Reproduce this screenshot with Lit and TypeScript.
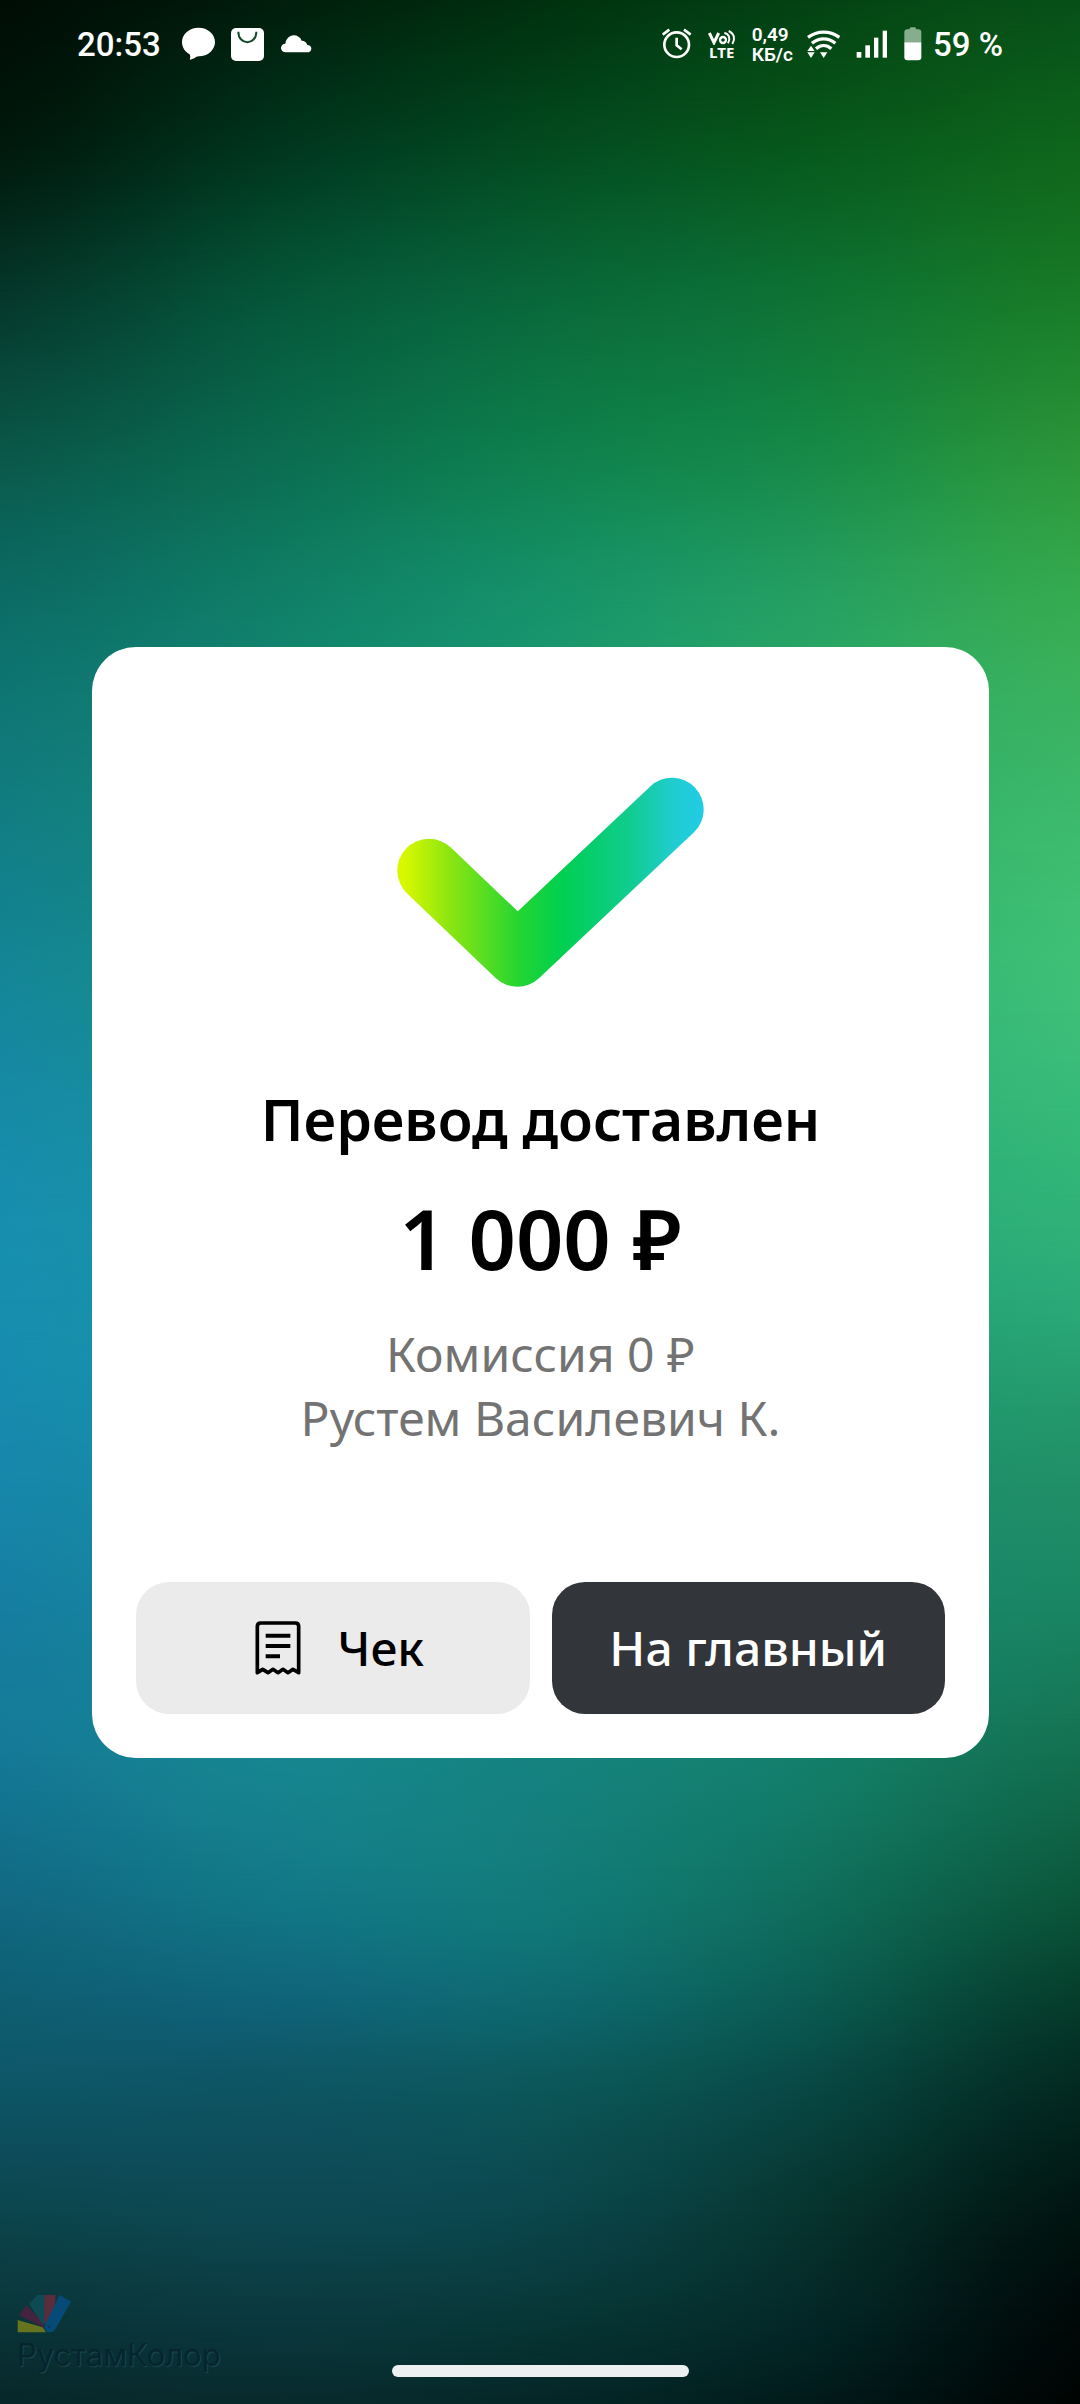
import { LitElement, html, css } from "lit";
import { customElement, property } from "lit/decorators.js";
import { styleMap } from "lit/directives/style-map.js";

type Rgb = number[];

interface ColourRow {
  y: number;
  colours: Rgb[];
}

/* Rows of the backdrop mesh: the offset from the top in percent, then colours
   spread evenly from left to right. */
const MESH: [number, string][] = [
  [0, "000d06 001d0b 00300f 044213 075019"],
  [6, "00190d 00351d 034a20 07581c 0f651c"],
  [12, "053629 055438 096639 0e7133 187a27"],
  [19, "0a584a 0b6c50 0f804e 178a48 2b963a"],
  [25, "0c6c66 107f68 17926a 26a062 36ab50"],
  [31, "107979 148874 1a9a6e 2baa66 3bb565"],
  [40, "148596 188e80 1b9c78 2aae70 3fc077"],
  [48, "178cab 1a9498 1c9c84 28a878 33b778"],
  [54, "178eae 1994a0 1a9888 22a078 2baa77"],
  [60, "1789ac 1990a0 1a9088 1c9272 22946a"],
  [67, "167ea1 178a98 178a84 188570 1a8562"],
  [73, "147996 178690 15837f 147f6b 137050"],
  [79, "116982 127786 127a79 0f6e5c 0b563b"],
  [83, "0f5f72 106479 0e6a70 0b5c52 063e2c"],
  [87, "0d5566 0e5463 0c5659 084743 032920"],
  [92, "0c454d 0d4852 0b464c 07342f 011511"],
  [96, "0a373b 0b3a40 083838 042928 000a09"],
  [100, "08272a 082a2d 052627 021a1a 000403"],
];

const STEPS = 4;

const parse = (hex: string): Rgb =>
  [0, 2, 4].map((i) => parseInt(hex.slice(i, i + 2), 16));

/* Catmull-Rom subdivision of a list of vectors. */
function smooth(points: number[][]): number[][] {
  const at = (i: number) => points[Math.max(0, Math.min(points.length - 1, i))];
  const result: number[][] = [];
  for (let i = 0; i < points.length - 1; i++) {
    for (let s = 0; s < STEPS; s++) {
      const t = s / STEPS;
      result.push(
        points[i].map((_, k) => {
          const a = at(i - 1)[k];
          const b = at(i)[k];
          const c = at(i + 1)[k];
          const d = at(i + 2)[k];
          const v =
            0.5 *
            (2 * b +
              (c - a) * t +
              (2 * a - 5 * b + 4 * c - d) * t * t +
              (3 * b - a - 3 * c + d) * t * t * t);
          return Math.max(0, v);
        })
      );
    }
  }
  result.push(points[points.length - 1]);
  return result;
}

function buildRows(): ColourRow[] {
  const flat = MESH.map(([y, list]) => [
    y,
    ...smooth(list.split(" ").map(parse)).flat(),
  ]);
  return smooth(flat).map(([y, ...channels]) => {
    const colours: Rgb[] = [];
    for (let i = 0; i < channels.length; i += 3) {
      colours.push(channels.slice(i, i + 3));
    }
    return { y, colours };
  });
}

const ROWS = buildRows();

@customElement("mesh-backdrop")
export class MeshBackdrop extends LitElement {
  static styles = css`
    :host {
      display: block;
      overflow: hidden;
    }
    .band {
      position: absolute;
      inset: 0;
    }
  `;

  render() {
    return ROWS.map((row, i) => {
      const stops = row.colours.map(
        (c) => `rgb(${c.map((v) => Math.round(v)).join(" ")})`
      );
      const mask =
        i === 0
          ? "none"
          : `linear-gradient(to bottom, transparent ${ROWS[i - 1].y}%, black ${row.y}%)`;
      return html`<div
        class="band"
        style=${styleMap({
          background: `linear-gradient(to right, ${stops.join(", ")})`,
          "mask-image": mask,
        })}
      ></div>`;
    });
  }
}

@customElement("status-bar")
export class StatusBar extends LitElement {
  @property() time = "20:53";
  @property() battery = "59 %";

  static styles = css`
    :host {
      display: flex;
      align-items: center;
      justify-content: space-between;
      height: 88px;
      padding: 0 77px;
      box-sizing: border-box;
      color: #fff;
      font: 500 33px/40px Roboto, sans-serif;
    }
    .group {
      display: flex;
      align-items: center;
      gap: 16px;
    }
    .time,
    .charge {
      padding-top: 2px;
      white-space: nowrap;
    }
    .time {
      margin-right: 5px;
    }
    .speed {
      padding-top: 2px;
      margin-right: -2px;
      font-size: 19px;
      line-height: 20px;
      font-weight: 600;
      white-space: nowrap;
    }
    .charge {
      margin-left: -5px;
    }
    .volte {
      display: grid;
      justify-items: center;
    }
    .lte {
      font: 700 15px/14px "Open Sans", sans-serif;
    }
    svg {
      display: block;
      flex: none;
    }
  `;

  render() {
    return html`
      <div class="group">
        <span class="time">${this.time}</span>
        <svg width="33" height="34" viewBox="546 82 99 102" fill="#fff" aria-hidden="true">
          <path d="M596 84c27 0 49 19 49 43s-22 43-48 43l-8 1c-5 4-10 6-18 9-2 0-2-1-1-3 1-4 1-8-1-13-14-8-23-21-23-37 0-24 22-43 50-43z" />
        </svg>
        <svg width="33" height="33" viewBox="693 84 99 99" aria-hidden="true">
          <rect x="693" y="84" width="99" height="99" rx="15" fill="#fff" />
          <path d="M715 95c0 42 54 42 54 0" fill="none" stroke="#12482b" stroke-width="6" />
        </svg>
        <svg width="32" height="34" viewBox="839 80 96 102" fill="#fff" aria-hidden="true">
          <path d="M856 156c-8 0-14-6-14-13 0-8 6-13 13-13 2-14 12-25 25-25 11 0 20 6 24 16 9 0 15 5 17 13 7 0 12 4 12 11 0 6-5 11-12 11z" />
        </svg>
      </div>
      <div class="group">
        <svg width="30" height="32" viewBox="66 84 90 96" fill="none" stroke="#fff" aria-hidden="true">
          <circle cx="110" cy="134" r="37" stroke-width="8" />
          <path d="M110 113v23l15 12" stroke-width="8" />
          <path d="M68 104l20-15M152 104l-20-15" stroke-width="8" />
        </svg>
        <div class="volte">
          <svg width="28" height="16" viewBox="200 84 84 48" fill="none" stroke="#fff" role="img" aria-label="Vo">
            <path d="M204 96l14 29 14-29" stroke-width="9" />
            <circle cx="245" cy="117" r="9" stroke-width="7" />
            <path d="M249 96c15 2 19 18 11 31M262 90c18 8 20 25 11 39" stroke-width="6" />
          </svg>
          <span class="lte">LTE</span>
        </div>
        <div class="speed">0,49<br />КБ/с</div>
        <svg width="33" height="32" viewBox="498 82 99 96" aria-hidden="true">
          <g fill="none" stroke="#fff" stroke-width="10">
            <path d="M501 110c28-21 66-21 94 0" />
            <path d="M513 128c21-18 49-18 70 0" />
            <path d="M525 144c14-12 32-12 46 0" />
          </g>
          <path d="M499 151l11-16 11 16zM499 155h22l-11 17zM537 155h22l-11 17z" fill="#fff" />
        </svg>
        <svg width="32" height="32" viewBox="647 82 96 96" fill="#fff" aria-hidden="true">
          <rect x="649" y="154" width="14" height="17" />
          <rect x="675" y="134" width="14" height="37" />
          <rect x="701" y="111" width="13" height="60" />
          <rect x="727" y="90" width="13" height="81" />
        </svg>
        <svg width="18" height="34" viewBox="794 80 54 102" aria-hidden="true">
          <path d="M795 126v-30q0-9 9-9h6q1-6 5-6h11q4 0 5 6h6q9 0 9 9v30z" fill="#86ad8d" />
          <path d="M795 126h51v45q0 9-9 9h-33q-9 0-9-9z" fill="#fff" />
        </svg>
        <span class="charge">${this.battery}</span>
      </div>
    `;
  }
}

@customElement("transfer-result")
export class TransferResult extends LitElement {
  static styles = css`
    :host {
      display: block;
      box-sizing: border-box;
      padding: 44px;
      border-radius: 44px;
      background: #fff;
      font-family: "Noto Sans", sans-serif;
      text-align: center;
      color: #000;
    }
    .check {
      display: block;
      margin: 0 auto;
    }
    h1,
    p {
      margin: 0;
    }
    h1 {
      margin-top: 40px;
      font-size: 57px;
      line-height: 72px;
      font-weight: 600;
    }
    .amount {
      margin-top: 31px;
      font-size: 83px;
      line-height: 104px;
      font-weight: 600;
    }
    .details {
      margin-top: 32px;
      font-size: 48px;
      line-height: 64px;
      color: #737373;
    }
    .actions {
      display: grid;
      grid-template-columns: 1fr 1fr;
      gap: 22px;
      margin-top: 132px;
    }
    button {
      display: flex;
      align-items: center;
      justify-content: center;
      gap: 22px;
      height: 132px;
      padding: 0;
      border: 0;
      border-radius: 33px;
      font: 500 48px/64px "Noto Sans", sans-serif;
      cursor: pointer;
    }
    .secondary {
      background: #ebebeb;
      color: #000;
    }
    .primary {
      background: #32363a;
      color: #fff;
    }
  `;

  render() {
    return html`
      <svg class="check" width="440" height="352" viewBox="320 691 440 352" aria-hidden="true">
        <defs>
          <linearGradient id="tick" gradientUnits="userSpaceOnUse" x1="397" y1="0" x2="703" y2="0">
            <stop offset="0.02" stop-color="#d8f800" />
            <stop offset="0.16" stop-color="#90e610" />
            <stop offset="0.4" stop-color="#22d532" />
            <stop offset="0.54" stop-color="#00cf52" />
            <stop offset="0.76" stop-color="#10cc90" />
            <stop offset="0.9" stop-color="#1fcdcf" />
            <stop offset="1" stop-color="#22cbe6" />
          </linearGradient>
        </defs>
        <path d="M428 870.5L516.5 955L671 809.5" fill="none" stroke="url(#tick)" stroke-width="63.4" stroke-linecap="round" stroke-linejoin="round" />
      </svg>
      <h1>Перевод доставлен</h1>
      <p class="amount">1 000 ₽</p>
      <div class="details">
        <p>Комиссия 0 ₽</p>
        <p>Рустем Василевич К.</p>
      </div>
      <div class="actions">
        <button class="secondary" type="button">
          <svg width="74" height="56" viewBox="480 180 222 168" fill="none" stroke="#000" aria-hidden="true">
            <path d="M529 338V199q0-10 10-10h104q10 0 10 10v139l-17-10-15 10-15-10-15 10-15-10-15 10-16-10z" stroke-width="11" stroke-linejoin="round" />
            <path d="M554 227h74M554 258h74M554 289h43" stroke-width="12" />
          </svg>
          <span>Чек</span>
        </button>
        <button class="primary" type="button">На главный</button>
      </div>
    `;
  }
}

@customElement("app-root")
export class AppRoot extends LitElement {
  static styles = css`
    :host {
      display: block;
    }
    .screen {
      position: relative;
      display: grid;
      grid-template-rows: auto 1fr auto;
      min-height: 100vh;
      background: #000;
    }
    .backdrop {
      position: absolute;
      inset: 0;
    }
    .bar,
    main,
    .nav {
      position: relative;
    }
    main {
      display: grid;
      align-content: center;
      padding: 0 91px 0 92px;
    }
    .nav {
      display: flex;
      justify-content: center;
      align-items: flex-end;
      height: 88px;
      padding-bottom: 27px;
      box-sizing: border-box;
    }
    .handle {
      width: 297px;
      height: 12px;
      border-radius: 6px;
      background: #ecf0f1;
    }
    .brand {
      position: absolute;
      left: 17px;
      bottom: 29px;
      color: #06252c;
      font: 400 31px/40px Inter, sans-serif;
      text-shadow: 1px 1px 1px rgba(60, 110, 115, 0.4);
    }
    .brand svg {
      display: block;
    }
  `;

  render() {
    return html`
      <div class="screen">
        <mesh-backdrop class="backdrop"></mesh-backdrop>
        <status-bar class="bar"></status-bar>
        <main><transfer-result></transfer-result></main>
        <div class="nav"><div class="handle"></div></div>
        <div class="brand">
          <svg width="56" height="42" viewBox="52 70 168 126" aria-hidden="true">
            <path d="M54 151l75 22 10 15H54z" fill="#66731f" />
            <path d="M58 137l22-30 52 52 2 16z" fill="#44233f" />
            <path d="M88 102l26-27 20 2 4 84-8 4z" fill="#0d4a54" />
            <path d="M134 76h33v42l-29 46-4-4z" fill="#5c2b3c" />
            <path d="M180 76l34 20-48 84q-12 12-24 6-12-8-6-22z" fill="#064a78" />
            <circle cx="148" cy="172" r="4" fill="#0a3a5c" />
          </svg>
          <span>РустамКолор</span>
        </div>
      </div>
    `;
  }
}
